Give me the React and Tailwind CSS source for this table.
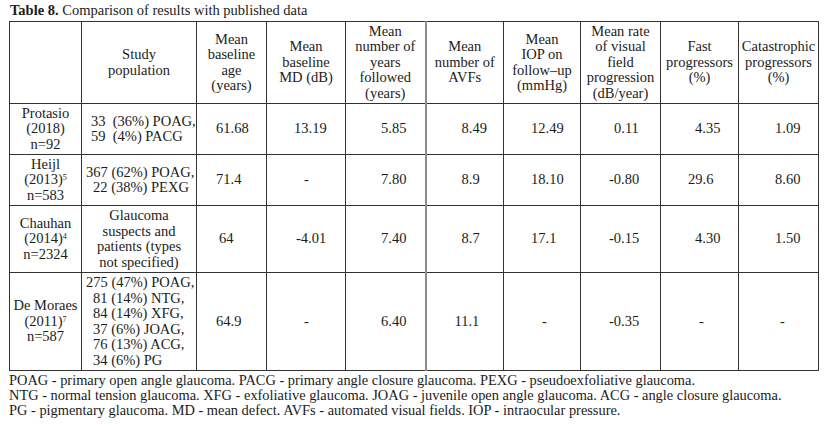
const cols = [72, 115, 70, 79, 80, 78, 77, 80, 78, 80];

const headers = [
  [],
  ["Study", "population"],
  ["Mean", "baseline", "age", "(years)"],
  ["Mean", "baseline", "MD (dB)"],
  ["Mean", "number of", "years", "followed", "(years)"],
  ["Mean", "number of", "AVFs"],
  ["Mean", "IOP on", "follow–up", "(mmHg)"],
  ["Mean rate", "of visual", "field", "progression", "(dB/year)"],
  ["Fast", "progressors", "(%)"],
  ["Catastrophic", "progressors", "(%)"],
];

// pl = left offset of the value inside its column, taken from the picture
const rows = [
  {
    h: 51,
    study: { name: "Protasio", year: "(2018)", sup: "", n: "n=92" },
    pop: [
      ["33\u00a0 (36%) POAG,", 9],
      ["59\u00a0 (4%) PACG", 9],
    ],
    vals: [
      ["61.68", 19],
      ["13.19", 27],
      ["5.85", 35],
      ["8.49", 35],
      ["12.49", 27],
      ["0.11", 33],
      ["4.35", 34],
      ["1.09", 36],
    ],
  },
  {
    h: 51,
    study: { name: "Heijl", year: "(2013)", sup: "5", n: "n=583" },
    pop: [
      ["367 (62%) POAG,", 4],
      ["22 (38%) PEXG", 11],
    ],
    vals: [
      ["71.4", 19],
      ["-", 37],
      ["7.80", 35],
      ["8.9", 35],
      ["18.10", 27],
      ["-0.80", 28],
      ["29.6", 27],
      ["8.60", 36],
    ],
  },
  {
    h: 67,
    study: { name: "Chauhan", year: "(2014)", sup: "4", n: "n=2324" },
    popCentered: ["Glaucoma", "suspects and", "patients (types", "not specified)"],
    vals: [
      ["64", 22],
      ["-4.01", 29],
      ["7.40", 35],
      ["8.7", 35],
      ["17.1", 27],
      ["-0.15", 28],
      ["4.30", 34],
      ["1.50", 36],
    ],
  },
  {
    h: 98,
    study: { name: "De Moraes", year: "(2011)", sup: "7", n: "n=587" },
    pop: [
      ["275 (47%) POAG,", 4],
      ["81 (14%) NTG,", 11],
      ["84 (14%) XFG,", 11],
      ["37 (6%) JOAG,", 11],
      ["76 (13%) ACG,", 11],
      ["34 (6%) PG", 11],
    ],
    vals: [
      ["64.9", 19],
      ["-", 37],
      ["6.40", 35],
      ["11.1", 28],
      ["-", 38],
      ["-0.35", 28],
      ["-", 38],
      ["-", 41],
    ],
  },
];

function cellBorder(i) {
  // the line between "years followed" and "AVFs" is a heavier grey rule
  if (i === 4) return "border border-[#333] border-r-2 border-r-[#8c8c8c]";
  return "border border-[#333]";
}

export default function App() {
  return (
    <div
      className="w-[825px] h-[425px] bg-white text-[#1c1c1c] overflow-hidden"
      style={{ fontFamily: '"Liberation Serif", "Times New Roman", serif' }}
    >
      {/* caption */}
      <div className="pl-[10px] pt-[1px] h-[21px] text-[14.5px] leading-[18px]">
        <span className="font-bold">Table 8.</span> Comparison of results with published data
      </div>

      {/* table */}
      <table className="ml-[9px] table-fixed border-collapse text-[14.5px] leading-[15.5px]">
        <colgroup>
          {cols.map((w, i) => (
            <col key={i} style={{ width: w }} />
          ))}
        </colgroup>
        <thead>
          <tr className="h-[82px]">
            {headers.map((lines, i) => (
              <th key={i} className={`${cellBorder(i)} p-0 font-normal text-center align-middle`}>
                {lines.map((l, j) => (
                  <div key={j} className="whitespace-nowrap">
                    {l}
                  </div>
                ))}
              </th>
            ))}
          </tr>
        </thead>
        <tbody>
          {rows.map((r, ri) => (
            <tr key={ri} style={{ height: r.h }}>
              <td className={`${cellBorder(0)} p-0 text-center align-middle`}>
                <div className="whitespace-nowrap">{r.study.name}</div>
                <div className="whitespace-nowrap">
                  {r.study.year}
                  {r.study.sup && <sup className="text-[8px]">{r.study.sup}</sup>}
                </div>
                <div className="whitespace-nowrap">{r.study.n}</div>
              </td>
              <td className={`${cellBorder(1)} p-0 align-middle`}>
                {r.pop
                  ? r.pop.map(([t, pl], j) => (
                      <div key={j} className="whitespace-nowrap" style={{ paddingLeft: pl }}>
                        {t}
                      </div>
                    ))
                  : r.popCentered.map((t, j) => (
                      <div key={j} className="whitespace-nowrap text-center">
                        {t}
                      </div>
                    ))}
              </td>
              {r.vals.map(([v, pl], vi) => (
                <td key={vi} className={`${cellBorder(vi + 2)} p-0 align-middle`}>
                  <div className="whitespace-nowrap" style={{ paddingLeft: pl }}>
                    {v}
                  </div>
                </td>
              ))}
            </tr>
          ))}
        </tbody>
      </table>

      {/* abbreviations */}
      <div className="pl-[9px] pt-[2px] text-[14.4px] leading-[15px]">
        <div>POAG - primary open angle glaucoma. PACG - primary angle closure glaucoma. PEXG - pseudoexfoliative glaucoma.</div>
        <div>NTG - normal tension glaucoma. XFG - exfoliative glaucoma. JOAG - juvenile open angle glaucoma. ACG - angle closure glaucoma.</div>
        <div>PG - pigmentary glaucoma. MD - mean defect. AVFs - automated visual fields. IOP - intraocular pressure.</div>
      </div>
    </div>
  );
}
